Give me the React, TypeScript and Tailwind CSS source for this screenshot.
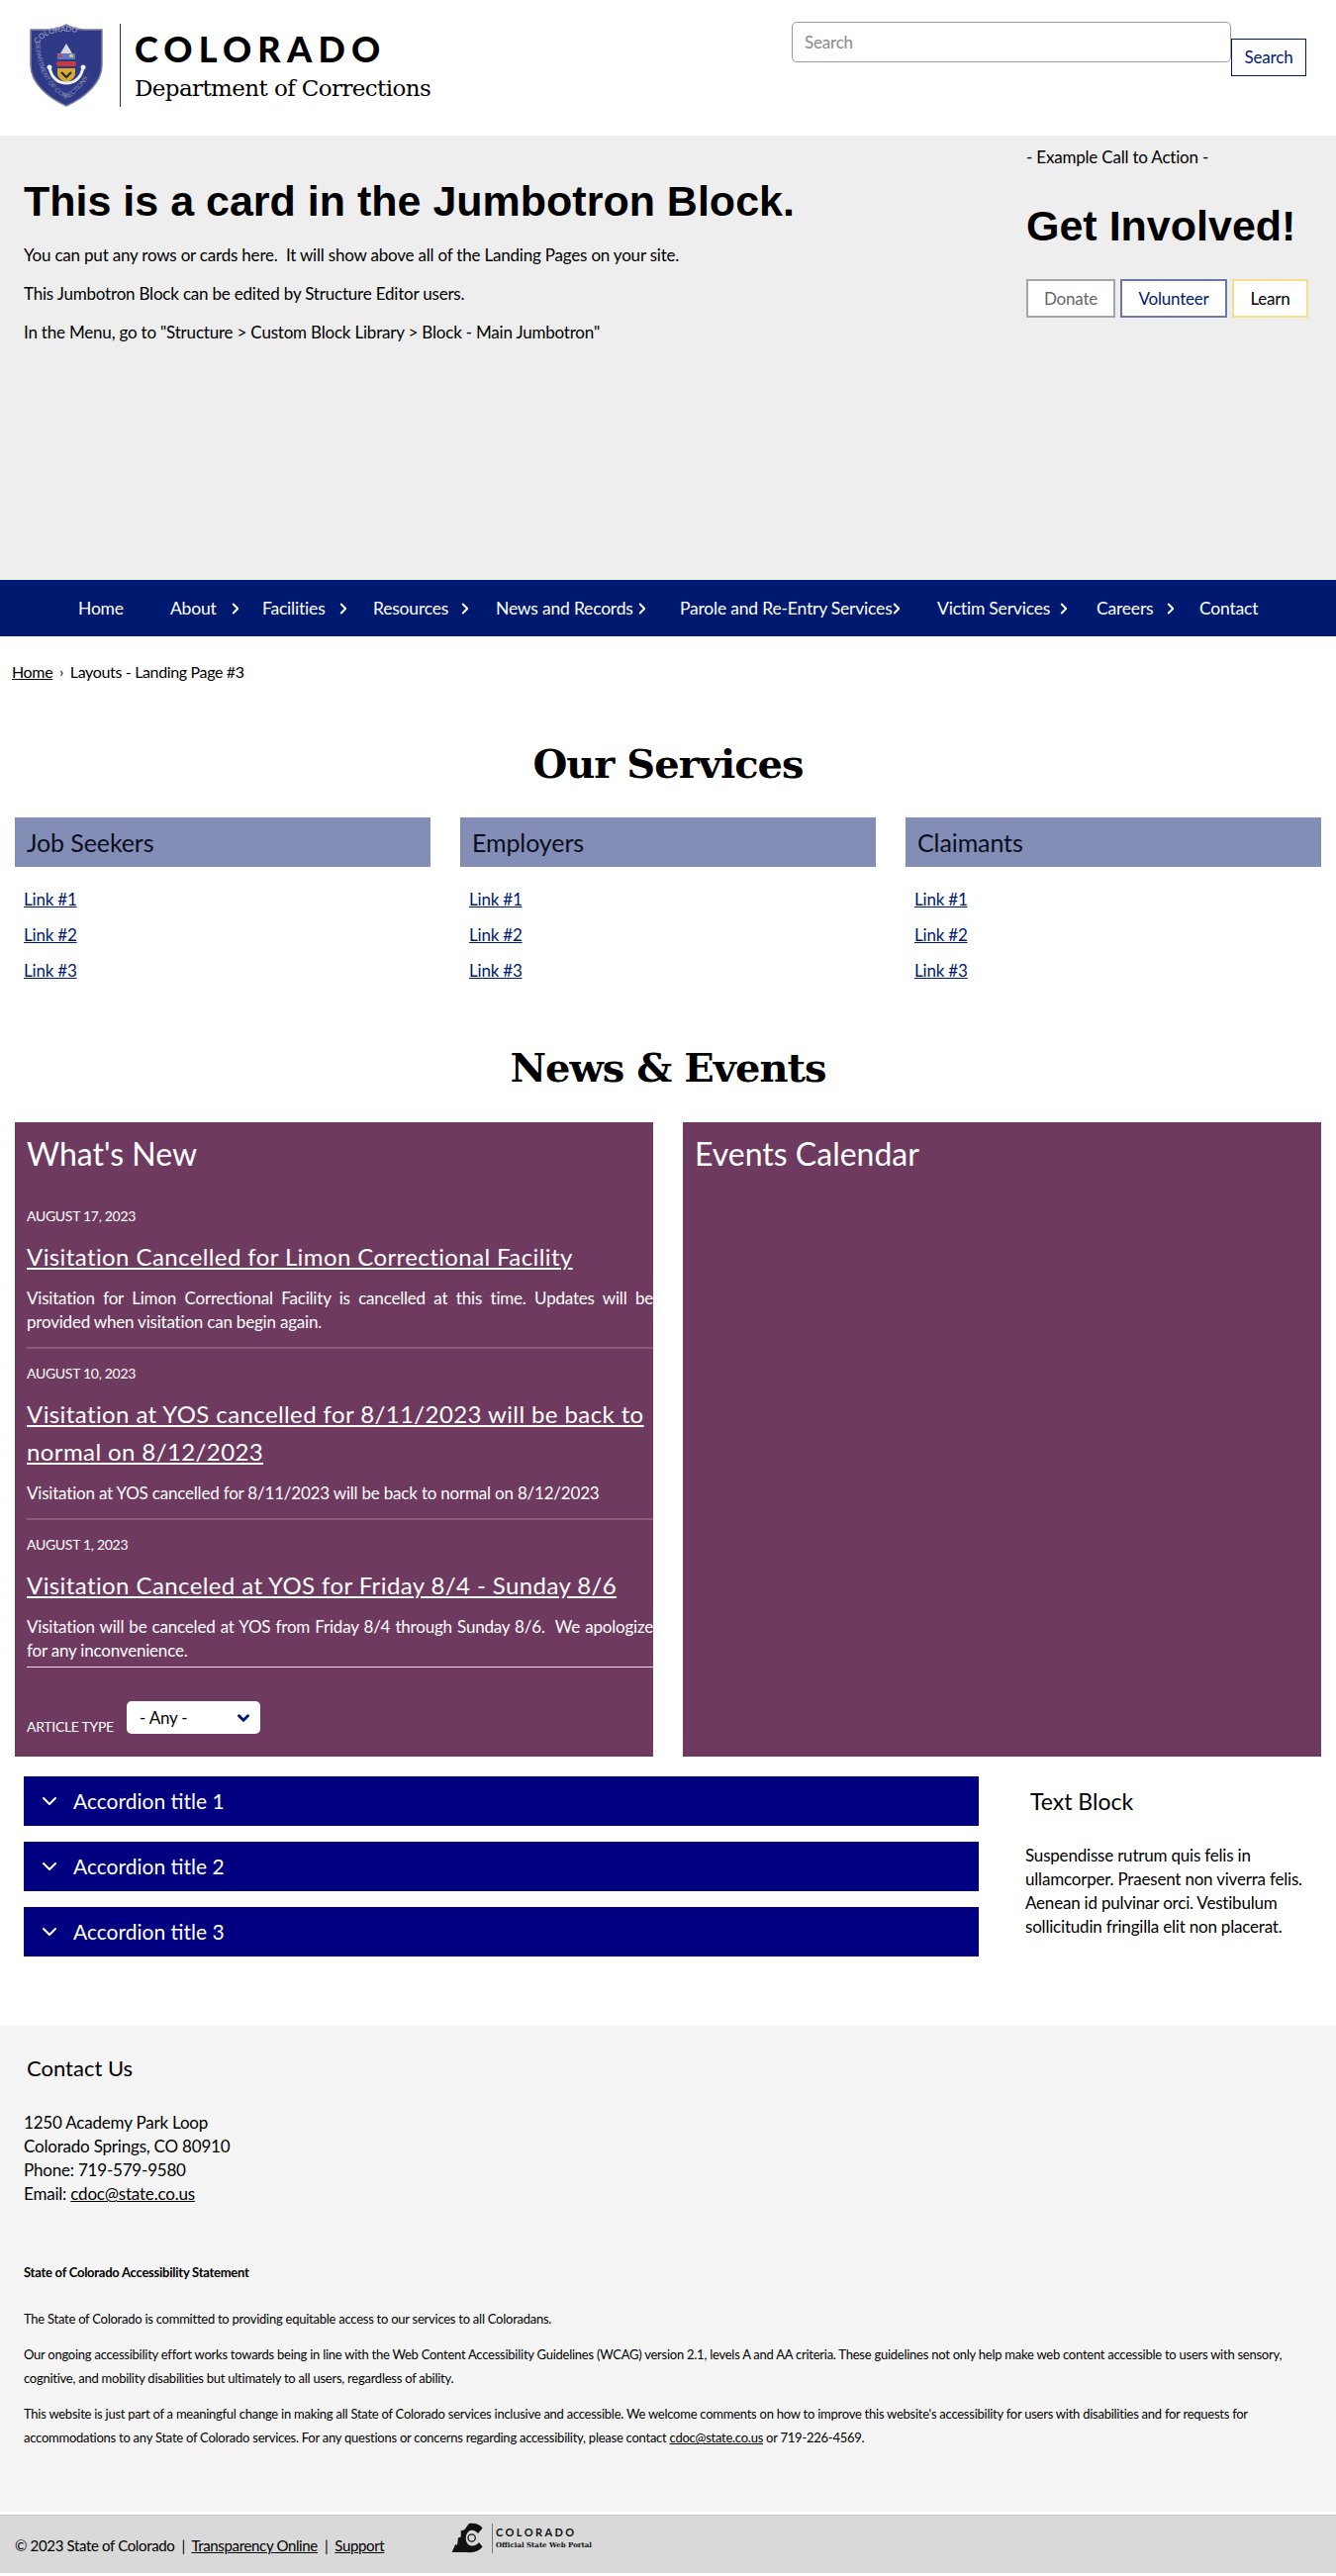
import { ChevronDown, ChevronRight } from 'lucide-react';

const navItems = [
  { label: 'Home', width: 'w-[93px]', chevron: '' },
  { label: 'About', width: 'w-[93px]', chevron: 'ml-[10px]' },
  { label: 'Facilities', width: 'w-[112px]', chevron: 'ml-[9px]' },
  { label: 'Resources', width: 'w-[124px]', chevron: 'ml-[8px]' },
  { label: 'News and Records', width: 'w-[186px]', chevron: 'ml-[0px]' },
  { label: 'Parole and Re-Entry Services', width: 'w-[260px]', chevron: '-ml-[5px]' },
  { label: 'Victim Services', width: 'w-[161px]', chevron: 'ml-[5px]' },
  { label: 'Careers', width: 'w-[104px]', chevron: 'ml-[9px]' },
  { label: 'Contact', width: 'w-[80px]', chevron: '' },
];

const services = ['Job Seekers', 'Employers', 'Claimants'];

const news = [
  {
    date: 'August 17, 2023',
    title: 'Visitation Cancelled for Limon Correctional Facility',
    body: 'Visitation for Limon Correctional Facility is cancelled at this time. Updates will be provided when visitation can begin again.',
  },
  {
    date: 'August 10, 2023',
    title: 'Visitation at YOS cancelled for 8/11/2023 will be back to normal on 8/12/2023',
    body: 'Visitation at YOS cancelled for 8/11/2023 will be back to normal on 8/12/2023',
  },
  {
    date: 'August 1, 2023',
    title: 'Visitation Canceled at YOS for Friday 8/4 - Sunday 8/6',
    body: 'Visitation will be canceled at YOS from Friday 8/4 through Sunday 8/6.  We apologize for any inconvenience.',
  },
];

function Shield() {
  return (
    <svg viewBox="0 0 74 84" className="w-[74px] h-[84px] shrink-0">
      <defs>
        <path id="shield-top" d="M8 21 C16 9 28 8 37 8 C46 8 58 9 66 21" />
        <path id="shield-bottom" d="M6 18 C6 44 18 66 37 76 C56 66 68 44 68 18" />
      </defs>
      <path d="M37 1 C44 5 50 6 56 6 L73 6 L73 42 C73 60 55 75 37 83 C19 75 1 60 1 42 L1 6 L18 6 C24 6 30 5 37 1 Z" fill="#2f3a86" stroke="#7d7f9f" strokeWidth="1.5" />
      <text fontSize="8" fill="#a9abc9" fontFamily="Liberation Sans, sans-serif">
        <textPath href="#shield-top">COLORADO</textPath>
      </text>
      <text fontSize="6.5" fill="#8f92bb" fontFamily="Liberation Sans, sans-serif">
        <textPath href="#shield-bottom">DEPARTMENT OF CORRECTIONS</textPath>
      </text>
      <path d="M37 20 L43 30 L31 30 Z" fill="#d9d9e4" />
      <rect x="28" y="30" width="18" height="6" fill="#5c78c8" />
      <rect x="29" y="31" width="4" height="3" fill="#c9493f" />
      <rect x="40" y="31" width="4" height="3" fill="#e3c24b" />
      <rect x="27" y="38" width="20" height="5" rx="2" fill="#c23b40" />
      <path d="M28 45 H46 V50 C46 55 41 58 37 59 C33 58 28 55 28 50 Z" fill="#d7a92e" />
      <path d="M32 49 L37 54 L42 49" fill="none" stroke="#2b2440" strokeWidth="2" />
      <path d="M20 44 C22 56 30 60 37 60 C44 60 52 56 54 44" fill="none" stroke="#eef0f7" strokeWidth="3" />
      <circle cx="20" cy="44" r="2.5" fill="#eef0f7" />
      <circle cx="54" cy="44" r="2.5" fill="#eef0f7" />
    </svg>
  );
}

function PortalLogo() {
  return (
    <div className="flex items-center mt-[7px]">
      <svg viewBox="0 0 36 34" className="w-[36px] h-[31px]">
        <path d="M19 1 C26 0 31 2 34 6 L29 12 C26 9 23 8 20 9 C15 11 14 20 18 24 C22 27 27 26 30 22 L34 27 C30 32 24 34 17 33 L0 33 L4 24 L6 25 L7 17 L10 16 L10 9 L14 8 Z" fill="#111" />
        <circle cx="22" cy="17" r="4" fill="none" stroke="#111" strokeWidth="1.4" />
      </svg>
      <div className="w-px h-[30px] bg-[#777] ml-[6px] mr-[3px]" />
      <div className="text-[#111]">
        <div className="text-[11px] leading-[14px] font-bold tracking-[2.4px]">COLORADO</div>
        <div className="text-[7px] leading-[12px] font-bold tracking-normal font-['DejaVu_Serif',serif] whitespace-nowrap">Official State Web Portal</div>
      </div>
    </div>
  );
}

export default function App() {
  return (
    <div className="w-[1350px] bg-white text-black text-[17px] leading-[24px] font-['Lato',sans-serif] tracking-[-0.2px]">
      {/* Header */}
      <header className="h-[137px] flex justify-between">
        <div className="flex items-start pl-[30px] pt-[24px]">
          <Shield />
          <div className="w-px h-[84px] bg-[#333] ml-[17px] mr-[14px]" />
          <div>
            <div className="text-[36px] leading-[36px] mt-[7px] font-black tracking-[6.2px]">COLORADO</div>
            <div className="text-[23px] leading-[30px] mt-[7px] tracking-[-0.6px] font-['DejaVu_Serif',serif]">Department of Corrections</div>
          </div>
        </div>
        <div className="flex items-start pr-[30px]">
          <div className="mt-[22px] w-[444px] h-[41px] border border-[#9a9aa5] rounded-[5px] pl-[12px] flex items-center text-[#8a8a8a]">Search</div>
          <div className="mt-[39px] w-[76px] h-[38px] border border-[#001970] flex items-center justify-center text-[#001970]">Search</div>
        </div>
      </header>

      {/* Jumbotron */}
      <section className="h-[449px] bg-[#eeeeee] flex justify-between">
        <div className="pl-[24px] pt-[38px]">
          <h1 className="text-[43px] leading-[56px] font-bold tracking-normal font-['Liberation_Sans',Arial,sans-serif]">This is a card in the Jumbotron Block.</h1>
          <p className="mt-[15px] whitespace-pre-wrap">You can put any rows or cards here.  It will show above all of the Landing Pages on your site.</p>
          <p className="mt-[15px]">This Jumbotron Block can be edited by Structure Editor users.</p>
          <p className="mt-[15px]">In the Menu, go to "Structure &gt; Custom Block Library &gt; Block - Main Jumbotron"</p>
        </div>
        <div className="w-[313px] pt-[10px]">
          <p>- Example Call to Action -</p>
          <h2 className="mt-[29px] text-[43px] leading-[56px] font-bold tracking-normal whitespace-nowrap font-['Liberation_Sans',Arial,sans-serif]">Get Involved!</h2>
          <div className="mt-[26px] flex gap-[5px]">
            <div className="w-[90px] h-[39px] border-2 border-[#a5a5ad] bg-white text-[#666] flex items-center justify-center">Donate</div>
            <div className="w-[108px] h-[39px] border-2 border-[#6d78a8] bg-white text-[#001970] flex items-center justify-center">Volunteer</div>
            <div className="w-[77px] h-[39px] border-2 border-[#f4e08c] bg-white flex items-center justify-center">Learn</div>
          </div>
        </div>
      </section>

      {/* Main nav */}
      <nav className="h-[57px] bg-[#001970] pl-[79px] flex items-center text-white text-[17.5px]">
        {navItems.map((item) => (
          <div key={item.label} className={`flex items-center shrink-0 whitespace-nowrap ${item.width}`}>
            <span>{item.label}</span>
            {item.chevron && <ChevronRight size={18} strokeWidth={2.5} className={item.chevron} />}
          </div>
        ))}
      </nav>

      {/* Breadcrumb */}
      <div className="pl-[12px] mt-[24px] text-[16px] tracking-[-0.35px] flex items-center">
        <span className="underline">Home</span>
        <span className="mx-[7px] text-[14px]">›</span>
        <span>Layouts - Landing Page #3</span>
      </div>

      <h2 className="mt-[51px] text-center text-[40px] leading-[60px] font-bold tracking-[-1px] font-['DejaVu_Serif',serif]">Our Services</h2>

      <div className="mt-[24px] px-[15px] grid grid-cols-3 gap-[30px]">
        {services.map((name) => (
          <div key={name}>
            <div className="h-[50px] bg-[#838db5] pl-[12px] flex items-center text-[25px] tracking-[-0.1px] text-[#0a0f20]">{name}</div>
            <div className="mt-[21px] pl-[9px] flex flex-col gap-[12px] text-[#001970]">
              <span className="underline">Link #1</span>
              <span className="underline">Link #2</span>
              <span className="underline">Link #3</span>
            </div>
          </div>
        ))}
      </div>

      <h2 className="mt-[56px] text-center text-[40px] leading-[60px] font-bold tracking-[-1px] font-['DejaVu_Serif',serif]">News &amp; Events</h2>

      <div className="mt-[25px] px-[15px] grid grid-cols-2 gap-[30px] text-white">
        <div className="h-[641px] bg-[#6f3a5f] pl-[12px]">
          <h3 className="pt-[12px] text-[32px] leading-[40px] tracking-normal">What's New</h3>
          <div className="mt-[33px]">
            {news.map((n, i) => (
              <article key={n.date} className={i === 2 ? 'border-b border-[#f3d9ea] pb-[4px]' : 'border-b-2 border-[#8a5c7c] mb-[15px] pb-[13px]'}>
                <div className="uppercase text-[14px] leading-[20px] tracking-[-0.3px]">{n.date}</div>
                <a className="block mt-[12px] text-[24px] leading-[38px] underline tracking-[0.4px]">{n.title}</a>
                <p className="mt-[11px] text-justify whitespace-pre-wrap">{n.body}</p>
              </article>
            ))}
          </div>
          <div className="mt-[34px] flex items-end">
            <span className="w-[101px] uppercase text-[14px] leading-[20px] tracking-[-0.3px] mb-[-3px]">Article Type</span>
            <div className="w-[135px] h-[33px] bg-white rounded-[5px] text-black pl-[13px] pr-[8px] flex items-center justify-between">
              <span>- Any -</span>
              <ChevronDown size={18} strokeWidth={4} className="text-[#001970]" />
            </div>
          </div>
        </div>
        <div className="h-[641px] bg-[#6f3a5f] pl-[12px]">
          <h3 className="pt-[12px] text-[32px] leading-[40px] tracking-normal">Events Calendar</h3>
        </div>
      </div>

      {/* Accordions + text block */}
      <div className="mt-[20px] flex h-[252px]">
        <div className="ml-[24px] w-[965px] flex flex-col gap-[16px]">
          {[1, 2, 3].map((n) => (
            <div key={n} className="h-[50px] bg-[#000080] text-white flex items-center pl-[14px]">
              <ChevronDown size={24} strokeWidth={2} />
              <span className="ml-[12px] text-[21px] tracking-normal">Accordion title {n}</span>
            </div>
          ))}
        </div>
        <div className="ml-[47px] w-[300px]">
          <h3 className="ml-[5px] text-[23px] leading-[30px] mt-[10px] tracking-normal">Text Block</h3>
          <p className="mt-[28px]">Suspendisse rutrum quis felis in ullamcorper. Praesent non viverra felis. Aenean id pulvinar orci. Vestibulum sollicitudin fringilla elit non placerat.</p>
        </div>
      </div>

      {/* Contact + accessibility */}
      <footer className="h-[491px] bg-[#f5f5f5] pl-[24px] pr-[24px]">
        <h3 className="pt-[28px] pl-[3px] text-[22px] leading-[30px] tracking-normal">Contact Us</h3>
        <div className="mt-[28px]">
          <div>1250 Academy Park Loop</div>
          <div>Colorado Springs, CO 80910</div>
          <div>Phone: 719-579-9580</div>
          <div>Email: <span className="underline">cdoc@state.co.us</span></div>
        </div>
        <div className="mt-[55px] text-[13px] tracking-[-0.25px]">
          <p className="font-bold">State of Colorado Accessibility Statement</p>
          <p className="mt-[23px]">The State of Colorado is committed to providing equitable access to our services to all Coloradans.</p>
          <p className="mt-[12px]">Our ongoing accessibility effort works towards being in line with the Web Content Accessibility Guidelines (WCAG) version 2.1, levels A and AA criteria. These guidelines not only help make web content accessible to users with sensory, cognitive, and mobility disabilities but ultimately to all users, regardless of ability.</p>
          <p className="mt-[12px]">This website is just part of a meaningful change in making all State of Colorado services inclusive and accessible. We welcome comments on how to improve this website's accessibility for users with disabilities and for requests for accommodations to any State of Colorado services. For any questions or concerns regarding accessibility, please contact <span className="underline">cdoc@state.co.us</span> or 719-226-4569.</p>
        </div>
      </footer>

      {/* Bottom bar */}
      <div className="mt-[3px] h-[59px] bg-[#d9d9d9] border-t border-[#c8c8c8] pl-[15px] flex items-start">
        <div className="w-[440px] pt-[18px] text-[15px] tracking-[-0.35px] whitespace-pre">
          © 2023 State of Colorado  |  <span className="underline">Transparency Online</span>  |  <span className="underline">Support</span>
        </div>
        <PortalLogo />
      </div>
    </div>
  );
}
